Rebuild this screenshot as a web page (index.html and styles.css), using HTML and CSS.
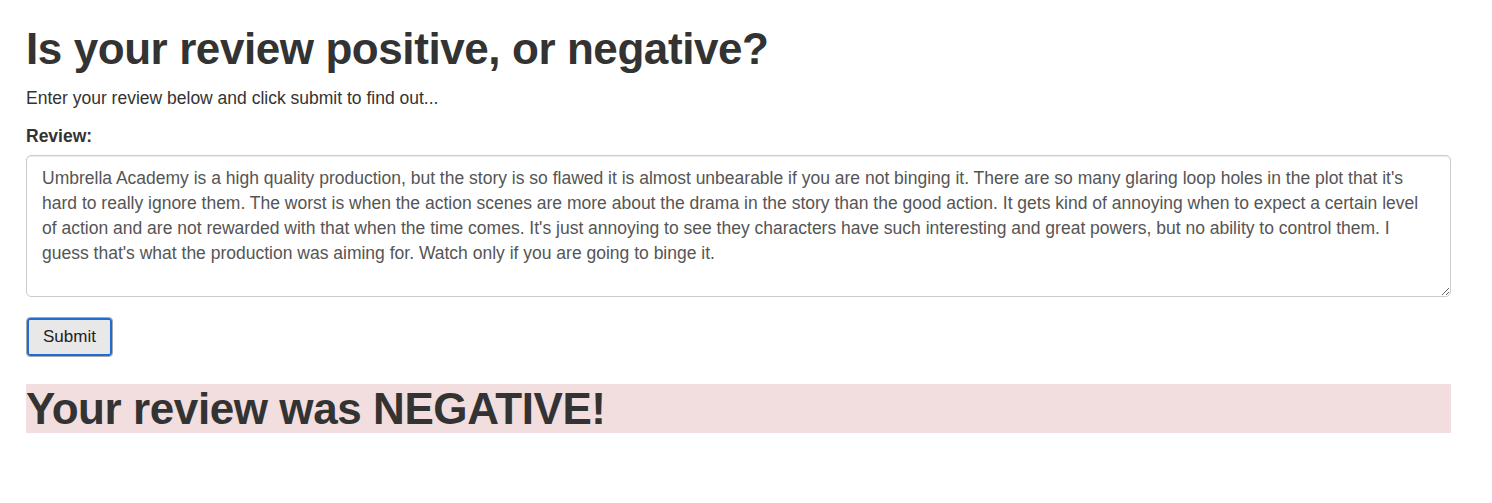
FILE: index.html
```html
<!DOCTYPE html>
<html>
<head>
<meta charset="utf-8">
<title>Review sentiment</title>
<link rel="stylesheet" href="styles.css">
</head>
<body>
<div class="container">
  <h1 class="title">Is your review positive, or negative?</h1>
  <p class="lead-text">Enter your review below and click submit to find out...</p>
  <form class="review-form">
    <div class="form-group">
      <label class="field-label" for="review">Review:</label>
      <textarea id="review" class="form-control" rows="5">Umbrella Academy is a high quality production, but the story is so flawed it is almost unbearable if you are not binging it. There are so many glaring loop holes in the plot that it's hard to really ignore them. The worst is when the action scenes are more about the drama in the story than the good action. It gets kind of annoying when to expect a certain level of action and are not rewarded with that when the time comes. It's just annoying to see they characters have such interesting and great powers, but no ability to control them. I guess that's what the production was aiming for. Watch only if you are going to binge it.</textarea>
    </div>
    <button type="button" class="submit-btn">Submit</button>
  </form>
  <h1 class="result bg-danger">Your review was NEGATIVE!</h1>
</div>
</body>
</html>
```
FILE: styles.css
```css
html, body {
  margin: 0;
  padding: 0;
  background: #fff;
}
body {
  font-family: "Liberation Sans", Arial, Helvetica, sans-serif;
  font-size: 17.5px;
  line-height: 25px;
  color: #333;
}
.container {
  padding: 0 41px 0 26px;
}
h1 {
  font-size: 44px;
  font-weight: bold;
  line-height: 49.5px;
  margin: 25px 0 12.5px;
  letter-spacing: -0.42px;
}
.title {
  margin-top: 24px;
}
.lead-text {
  margin: 0 0 12.5px;
}
.review-form {
  margin: 0;
}
.form-group {
  margin-bottom: 20px;
}
.field-label {
  display: inline-block;
  font-weight: bold;
  margin-bottom: 6px;
}
.form-control {
  display: block;
  box-sizing: border-box;
  width: 100%;
  height: 142px;
  padding: 10px 15px 5px;
  font-family: "Liberation Sans", Arial, Helvetica, sans-serif;
  font-size: 17.5px;
  line-height: 25px;
  color: #555;
  background: #fff;
  border: 1px solid #ccc;
  border-radius: 5px;
  box-shadow: inset 0 1px 1px rgba(0,0,0,0.075);
  resize: vertical;
  margin: 0;
}
.submit-btn {
  display: block;
  box-sizing: border-box;
  width: 87px;
  height: 40px;
  margin: 0;
  padding: 0;
  font-family: "Liberation Sans", Arial, Helvetica, sans-serif;
  font-size: 17px;
  color: #222;
  background: #e8e8e8;
  border: 1px solid #a9a9a9;
  border-radius: 4px;
  box-shadow: inset 0 0 0 2px #1f6bd6;
}
.result {
  margin-top: 27px;
}
.bg-danger {
  background-color: #f2dede;
}
```
